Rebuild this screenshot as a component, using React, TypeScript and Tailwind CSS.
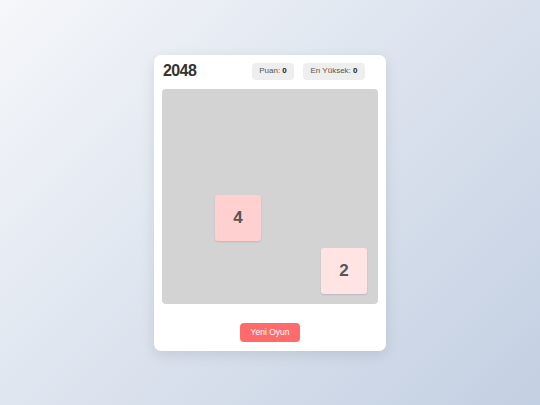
const tiles: Record<string, number> = { "2-1": 4, "3-3": 2 };

const tileColor: Record<number, string> = {
  2: "bg-[#ffe4e3]",
  4: "bg-[#ffd0cf]",
};

export default function App() {
  const cells = [];
  for (let r = 0; r < 4; r++) {
    for (let c = 0; c < 4; c++) {
      const v = tiles[`${r}-${c}`];
      cells.push(
        v ? (
          <div
            key={`${r}-${c}`}
            className={`w-[46px] h-[46px] rounded-[3px] flex items-center justify-center text-[17px] font-bold text-[#555] shadow-[0_1px_2px_rgba(0,0,0,0.12)] ${tileColor[v]}`}
          >
            {v}
          </div>
        ) : (
          <div key={`${r}-${c}`} className="w-[46px] h-[46px]" />
        )
      );
    }
  }

  return (
    <div
      className="w-full h-[405px] flex items-center justify-center bg-[linear-gradient(135deg,#f5f7fa_0%,#c3cfe2_100%)]"
      style={{ fontFamily: '"Liberation Sans", Arial, sans-serif' }}
    >
      <div className="w-[232px] bg-white rounded-[7px] shadow-[0_4px_14px_rgba(0,0,0,0.1)] px-[8px] pt-[8px] pb-[9px] flex flex-col">
        <div className="flex items-center justify-between h-[17px] mb-[9px] pr-[13px]">
          <h1 className="text-[16px] font-bold text-[#333] leading-none pl-[1px] tracking-[-0.6px]">2048</h1>
          <div className="flex gap-[9px]">
            <div className="h-[17px] w-[42px] flex items-center justify-center rounded-[4px] bg-[#eeeeee] text-[8px] text-[#555]">
              Puan:&nbsp;<b className="text-[#222]">0</b>
            </div>
            <div className="h-[17px] w-[62px] flex items-center justify-center rounded-[4px] bg-[#eeeeee] text-[8px] text-[#555]">
              En Yüksek:&nbsp;<b className="text-[#222]">0</b>
            </div>
          </div>
        </div>
        <div className="w-[216px] h-[215px] bg-[#d3d3d3] rounded-[4px] grid grid-cols-[repeat(4,46px)] grid-rows-[repeat(4,46px)] gap-[7px]">
          {cells}
        </div>
        <div className="flex justify-center mt-[19px]">
          <button className="w-[60px] h-[19px] rounded-[4px] bg-[#ff6b6b] text-white text-[8.5px] flex items-center justify-center">
            Yeni Oyun
          </button>
        </div>
      </div>
    </div>
  );
}
